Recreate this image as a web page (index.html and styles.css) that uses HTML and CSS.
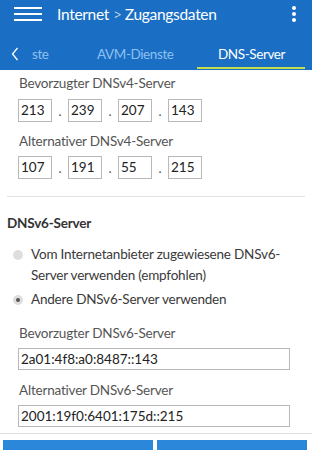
FILE: index.html
```html
<!DOCTYPE html>
<html lang="de">
<head>
<meta charset="utf-8">
<link rel="stylesheet" href="styles.css">
</head>
<body>
<header class="header">
  <div class="topbar">
    <div class="burger"><span></span><span></span><span></span></div>
    <div class="title">Internet<span class="sep">&gt;</span>Zugangsdaten</div>
    <div class="dots"><span></span><span></span><span></span></div>
  </div>
  <nav class="tabs">
    <svg class="chev" width="8" height="14" viewBox="0 0 8 14"><path d="M6.5 1 L1.5 7 L6.5 13" fill="none" stroke="#fff" stroke-width="1.3"/></svg>
    <span class="tab t1">ste</span>
    <span class="tab t2">AVM-Dienste</span>
    <span class="tab t3 active">DNS-Server</span>
  </nav>
</header>
<main class="content">
  <div class="label l1">Bevorzugter DNSv4-Server</div>
  <div class="ip ip1">
    <span class="box">213</span><span class="dot">.</span>
    <span class="box">239</span><span class="dot">.</span>
    <span class="box">207</span><span class="dot">.</span>
    <span class="box">143</span>
  </div>
  <div class="label l2">Alternativer DNSv4-Server</div>
  <div class="ip ip2">
    <span class="box">107</span><span class="dot">.</span>
    <span class="box">191</span><span class="dot">.</span>
    <span class="box">55</span><span class="dot">.</span>
    <span class="box">215</span>
  </div>
  <hr class="rule r1">
  <h2 class="heading">DNSv6-Server</h2>
  <div class="radio r-a"><span class="circle"></span><span class="rtext">Vom Internetanbieter zugewiesene DNSv6-Server verwenden (empfohlen)</span></div>
  <div class="radio r-b"><span class="circle checked"></span><span class="rtext">Andere DNSv6-Server verwenden</span></div>
  <div class="label l3">Bevorzugter DNSv6-Server</div>
  <div class="wide">2a01:4f8:a0:8487::143</div>
  <div class="label l4">Alternativer DNSv6-Server</div>
  <div class="wide">2001:19f0:6401:175d::215</div>
  <hr class="rule r2">
  <div class="buttons"><span class="btn"></span><span class="btn"></span></div>
</main>
</body>
</html>
```

FILE: styles.css
```css
* { box-sizing: border-box; }
html, body { margin: 0; padding: 0; }
body {
  width: 312px;
  height: 450px;
  overflow: hidden;
  background: #fff;
  font-family: Lato, "Noto Sans", sans-serif;
  color: #3a3a3a;
}
.header {
  background: #1a6fc4;
  height: 70px;
  color: #fff;
}
.topbar {
  height: 28px;
  display: flex;
  align-items: center;
}
.burger {
  margin-left: 14px;
  width: 28px;
  display: flex;
  flex-direction: column;
  gap: 4px;
}
.burger span {
  display: block;
  height: 2px;
  background: #fff;
}
.title {
  margin-left: 15px;
  font-size: 15.5px;
  letter-spacing: -0.3px;
  flex: 1;
}
.sep {
  font-weight: 300;
  margin: 0 3px 0 4px;
}
.dots {
  margin-right: 16px;
  display: flex;
  flex-direction: column;
  gap: 2px;
}
.dots span {
  width: 4px;
  height: 4px;
  border-radius: 50%;
  background: #fff;
}
.tabs {
  height: 42px;
  display: flex;
  align-items: center;
  position: relative;
  font-size: 13.5px;
  letter-spacing: -0.4px;
  padding-top: 10px;
}
.chev {
  margin-left: 11px;
  flex: none;
}
.tab {
  display: block;
  color: #8dc0f0;
}
.t1 { margin-left: 13px; width: 65px; }
.t2 { width: 121px; }
.tab.active { color: #fff; }
.tabs::after {
  content: "";
  position: absolute;
  left: 197px;
  width: 108px;
  bottom: 1px;
  height: 2px;
  background: #c5dd4a;
}
.content { padding: 0 7px; }
.label {
  font-size: 13.5px;
  letter-spacing: -0.2px;
  color: #555;
  margin-left: 12px;
  height: 18px;
  line-height: 18px;
}
.l1 { margin-top: 4px; }
.l2 { margin-top: 10px; }
.ip {
  display: flex;
  align-items: center;
  margin-left: 11px;
}
.ip1 { margin-top: 7px; }
.ip2 { margin-top: 6px; }
.box {
  width: 34px;
  height: 23px;
  border: 1px solid #b8b8b8;
  font-size: 13.5px;
  line-height: 21px;
  padding-left: 2px;
  color: #222;
}
.dot {
  width: 16px;
  text-align: center;
  font-size: 13px;
  color: #555;
}
.rule {
  margin: 17px 0 0 0;
  border: 0;
  border-top: 1px solid #e2e2e2;
}
.heading {
  margin: 17px 0 0 0;
  font-size: 13.5px;
  letter-spacing: -0.2px;
  font-weight: 700;
  color: #333;
  line-height: 18px;
}
.radio {
  display: flex;
  align-items: flex-start;
  font-size: 13.5px;
  letter-spacing: -0.2px;
  line-height: 21px;
  color: #3a3a3a;
  margin-left: 6px;
}
.r-a { margin-top: 12px; }
.r-b { margin-top: 3px; }
.circle {
  flex: none;
  width: 10px;
  height: 10px;
  border-radius: 50%;
  background: #dedede;
  margin-top: 6px;
  margin-right: 8px;
  position: relative;
}
.circle.checked::after {
  content: "";
  position: absolute;
  left: 3px;
  top: 3px;
  width: 4px;
  height: 4px;
  border-radius: 50%;
  background: #555;
}
.rtext { width: 262px; }
.l3 { margin-top: 14px; }
.l4 { margin-top: 11px; }
.wide {
  margin-left: 11px;
  margin-top: 6px;
  width: 272px;
  height: 22px;
  border: 1px solid #b8b8b8;
  font-size: 13.5px;
  line-height: 20px;
  padding-left: 2px;
  color: #222;
}
.r2 { margin: 6px -7px 0; }
.buttons {
  display: flex;
  gap: 4px;
  margin: 6px -2px 0 -4px;
}
.btn {
  flex: 1;
  height: 20px;
  background: #2b87d9;
}
```
